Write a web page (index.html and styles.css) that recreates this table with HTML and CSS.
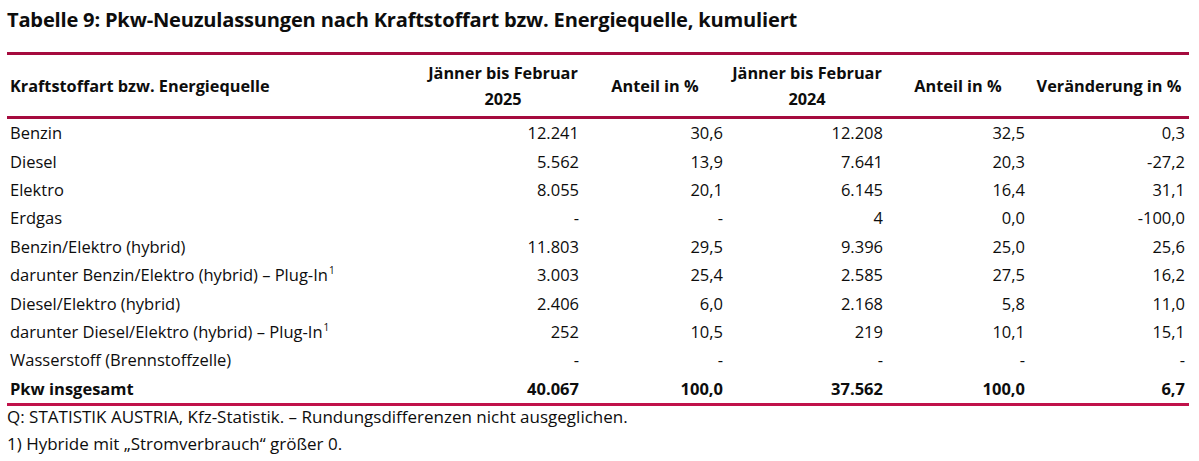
FILE: index.html
```html
<!DOCTYPE html>
<html lang="de">
<head>
<meta charset="utf-8">
<title>Tabelle 9</title>
<link rel="stylesheet" href="styles.css">
</head>
<body>
<div class="page">
  <h1 class="title">Tabelle 9: Pkw-Neuzulassungen nach Kraftstoffart bzw. Energiequelle, kumuliert</h1>
  <table class="data">
    <colgroup>
      <col class="c-label">
      <col class="c-num">
      <col class="c-pct">
      <col class="c-num">
      <col class="c-pct2">
      <col class="c-num">
    </colgroup>
    <thead>
      <tr>
        <th class="h-label">Kraftstoffart bzw. Energiequelle</th>
        <th>Jänner bis Februar<br>2025</th>
        <th>Anteil in %</th>
        <th>Jänner bis Februar<br>2024</th>
        <th>Anteil in %</th>
        <th>Veränderung in %</th>
      </tr>
    </thead>
    <tbody>
      <tr><td>Benzin</td><td>12.241</td><td>30,6</td><td>12.208</td><td>32,5</td><td>0,3</td></tr>
      <tr><td>Diesel</td><td>5.562</td><td>13,9</td><td>7.641</td><td>20,3</td><td>-27,2</td></tr>
      <tr><td>Elektro</td><td>8.055</td><td>20,1</td><td>6.145</td><td>16,4</td><td>31,1</td></tr>
      <tr><td>Erdgas</td><td>-</td><td>-</td><td>4</td><td>0,0</td><td>-100,0</td></tr>
      <tr><td>Benzin/Elektro (hybrid)</td><td>11.803</td><td>29,5</td><td>9.396</td><td>25,0</td><td>25,6</td></tr>
      <tr><td>darunter Benzin/Elektro (hybrid) – Plug-In<sup>1</sup></td><td>3.003</td><td>25,4</td><td>2.585</td><td>27,5</td><td>16,2</td></tr>
      <tr><td>Diesel/Elektro (hybrid)</td><td>2.406</td><td>6,0</td><td>2.168</td><td>5,8</td><td>11,0</td></tr>
      <tr><td>darunter Diesel/Elektro (hybrid) – Plug-In<sup>1</sup></td><td>252</td><td>10,5</td><td>219</td><td>10,1</td><td>15,1</td></tr>
      <tr><td>Wasserstoff (Brennstoffzelle)</td><td>-</td><td>-</td><td>-</td><td>-</td><td>-</td></tr>
      <tr class="total"><td>Pkw insgesamt</td><td>40.067</td><td>100,0</td><td>37.562</td><td>100,0</td><td>6,7</td></tr>
    </tbody>
  </table>
  <div class="notes">
    <p class="note note-source">Q: STATISTIK AUSTRIA, Kfz-Statistik. – Rundungsdifferenzen nicht ausgeglichen.</p>
    <p class="note note-foot">1) Hybride mit „Stromverbrauch“ größer 0.</p>
  </div>
</div>
</body>
</html>
```

FILE: styles.css
```css
html, body {
  margin: 0;
  padding: 0;
  background: #ffffff;
}

body {
  font-family: "Open Sans", Lato, sans-serif;
  color: #0d0d0d;
}

.page {
  padding: 8px 10px 0 7px;
}

.title {
  margin: 0;
  font-size: 20.1px;
  font-weight: 700;
  line-height: 24px;
  height: 44px;
  letter-spacing: -0.2px;
}

.data {
  width: 1182px;
  border-collapse: collapse;
  table-layout: fixed;
  font-size: 16.5px;
}

.c-label { width: 416px; }
.c-num { width: 160px; }
.c-pct { width: 144px; }
.c-pct2 { width: 142px; }

.data thead th {
  font-size: 16.3px;
  font-weight: 700;
  line-height: 26px;
  padding: 5px 4px 4px;
  text-align: center;
  vertical-align: middle;
  border-top: 3px solid #a50b3e;
  border-bottom: 3px solid #a50b3e;
}

.data thead th.h-label {
  text-align: left;
  padding-left: 3px;
}

.data tbody td {
  height: 28.4px;
  padding: 0 4px;
  text-align: right;
  vertical-align: middle;
  white-space: nowrap;
  line-height: 20px;
}

.data tbody td:first-child {
  text-align: left;
  padding-left: 3px;
}

.data tbody tr.total td {
  font-weight: 700;
  border-bottom: 3px solid #c0124a;
}

.data sup {
  font-size: 10px;
  line-height: 0;
  vertical-align: 7px;
  margin-left: 1px;
}

.notes {
  display: flex;
  flex-direction: column;
  gap: 2px;
}

.note {
  margin: 0;
  font-size: 17px;
}

.note-source {
  line-height: 22px;
}

.note-foot {
  line-height: 28px;
}
```
